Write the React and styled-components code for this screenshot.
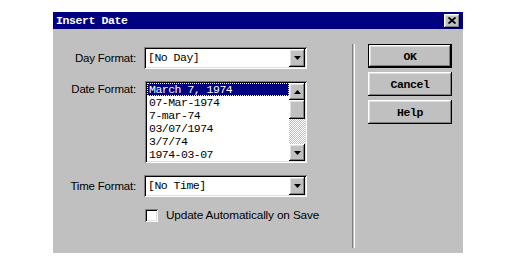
import React from "react";
import styled, { createGlobalStyle, css } from "styled-components";

const GlobalStyle = createGlobalStyle`
  html, body {
    margin: 0;
    padding: 0;
    background: #ffffff;
  }
  body {
    width: 521px;
    height: 270px;
    overflow: hidden;
  }
`;

const face = "#c0c0c0";
const navy = "#000080";
const mono = `"Liberation Mono", "DejaVu Sans Mono", monospace`;
const sans = `"Liberation Sans", Arial, sans-serif`;

const raised = css`
  background: ${face};
  box-shadow: inset -1px -1px #000000, inset 1px 1px #ffffff,
    inset -2px -2px #808080, inset 2px 2px #dfdfdf;
`;

const sunken = css`
  box-shadow: inset 1px 1px #808080, inset -1px -1px #ffffff,
    inset 2px 2px #000000, inset -2px -2px #dfdfdf;
`;

const Page = styled.div`
  padding: 12px 0 0 53px;
`;

const Dialog = styled.div`
  width: 410px;
  height: 241px;
  background: ${face};
  display: flex;
  flex-direction: column;
`;

const TitleBar = styled.div`
  height: 17px;
  background: ${navy};
  display: flex;
  align-items: center;
  justify-content: space-between;
  padding: 0 3px 0 3px;
`;

const Title = styled.span`
  color: #ffffff;
  font-family: ${mono};
  font-size: 11.5px;
  font-weight: 700;
  letter-spacing: -0.4px;
`;

const CloseButton = styled.div`
  ${raised};
  width: 16px;
  height: 14px;
  display: flex;
  align-items: center;
  justify-content: center;
`;

const Body = styled.div`
  flex: 1;
  display: flex;
`;

const FormPanel = styled.div`
  width: 299px;
  display: grid;
  grid-template-columns: 83px 163px;
  grid-auto-rows: min-content;
  column-gap: 8px;
  row-gap: 12px;
  padding-top: 18px;
  align-items: center;
`;

const Label = styled.label`
  font-family: ${sans};
  font-size: 11.5px;
  color: #000000;
  text-align: right;
  white-space: nowrap;
  letter-spacing: -0.2px;
  ${(p) =>
    p.$top &&
    css`
      align-self: start;
      margin-top: 2px;
    `}
`;

const Combo = styled.div`
  ${sunken};
  background: #ffffff;
  height: 22px;
  padding: 2px;
  box-sizing: border-box;
  display: flex;
  align-items: stretch;
`;

const ComboText = styled.span`
  flex: 1;
  font-family: ${mono};
  font-size: 11.5px;
  letter-spacing: -0.5px;
  line-height: 18px;
  padding-left: 2px;
  color: #000000;
`;

const ArrowButton = styled.div`
  ${raised};
  width: 16px;
  height: ${(p) => p.$height || 18}px;
  display: flex;
  align-items: center;
  justify-content: center;
  flex-shrink: 0;
`;

const ListBox = styled.div`
  ${sunken};
  background: #ffffff;
  height: 82px;
  margin-left: 1px;
  padding: 2px;
  box-sizing: border-box;
  display: flex;
`;

const Items = styled.ul`
  flex: 1;
  margin: 0;
  padding: 0;
  list-style: none;
`;

const Item = styled.li`
  height: 13px;
  font-family: ${mono};
  font-size: 11.5px;
  letter-spacing: -0.5px;
  line-height: 13px;
  padding-left: 2px;
  box-sizing: border-box;
  color: #000000;
  white-space: nowrap;
  ${(p) =>
    p.$selected &&
    css`
      background: ${navy};
      color: #ffffff;
      outline: 1px dotted #ffff80;
      outline-offset: -1px;
    `}
`;

const ScrollBar = styled.div`
  width: 16px;
  display: flex;
  flex-direction: column;
`;

const Thumb = styled.div`
  ${raised};
  height: 19px;
`;

const Track = styled.div`
  flex: 1;
  background: repeating-conic-gradient(#c0c0c0 0% 25%, #ffffff 0% 50%) 0 0 / 2px 2px;
`;

const CheckRow = styled.div`
  grid-column: 2;
  display: flex;
  align-items: center;
  gap: 8px;
  margin-top: -2px;
  margin-left: 1px;
  white-space: nowrap;
`;

const CheckBox = styled.span`
  ${sunken};
  background: #ffffff;
  width: 13px;
  height: 13px;
  flex-shrink: 0;
`;

const CheckLabel = styled.span`
  font-family: ${sans};
  font-size: 11.8px;
  color: #000000;
  letter-spacing: -0.15px;
  line-height: 16px;
`;

const Separator = styled.div`
  width: 1px;
  margin: 15px 0 5px;
  border-left: 1px solid #808080;
  border-right: 1px solid #ffffff;
`;

const ButtonColumn = styled.div`
  display: flex;
  flex-direction: column;
  gap: 4px;
  padding: 15px 0 0 13px;
`;

const Button = styled.div`
  ${raised};
  width: 84px;
  height: 24px;
  box-sizing: border-box;
  display: flex;
  align-items: center;
  justify-content: center;
  font-family: ${mono};
  font-size: 11.5px;
  font-weight: 700;
  letter-spacing: -0.4px;
  color: #000000;
  ${(p) =>
    p.$default &&
    css`
      box-shadow: inset 0 0 0 1px #000000, inset -2px -2px #000000,
        inset 2px 2px #ffffff, inset -3px -3px #808080, inset 3px 3px #dfdfdf;
    `}
`;

const Arrow = ({ up }) => (
  <svg width="7" height="4" viewBox="0 0 7 4">
    <polygon points={up ? "3.5,0 7,4 0,4" : "0,0 7,0 3.5,4"} fill="#000000" />
  </svg>
);

const CloseIcon = () => (
  <svg width="8" height="7" viewBox="0 0 8 7">
    <path d="M0.5 0.5 L7.5 6.5 M7.5 0.5 L0.5 6.5" stroke="#000000" strokeWidth="1.8" />
  </svg>
);

const dateFormats = [
  "March 7, 1974",
  "07-Mar-1974",
  "7-mar-74",
  "03/07/1974",
  "3/7/74",
  "1974-03-07",
];

const App = () => {
  return (
    <>
      <GlobalStyle />
      <Page>
        <Dialog>
          <TitleBar>
            <Title>Insert Date</Title>
            <CloseButton>
              <CloseIcon />
            </CloseButton>
          </TitleBar>
          <Body>
            <FormPanel>
              <Label>Day Format:</Label>
              <Combo>
                <ComboText>[No Day]</ComboText>
                <ArrowButton>
                  <Arrow />
                </ArrowButton>
              </Combo>

              <Label $top>Date Format:</Label>
              <ListBox>
                <Items>
                  {dateFormats.map((f, i) => (
                    <Item key={f} $selected={i === 0}>
                      {f}
                    </Item>
                  ))}
                </Items>
                <ScrollBar>
                  <ArrowButton $height={17}>
                    <Arrow up />
                  </ArrowButton>
                  <Thumb />
                  <Track />
                  <ArrowButton $height={17}>
                    <Arrow />
                  </ArrowButton>
                </ScrollBar>
              </ListBox>

              <Label>Time Format:</Label>
              <Combo>
                <ComboText>[No Time]</ComboText>
                <ArrowButton>
                  <Arrow />
                </ArrowButton>
              </Combo>

              <CheckRow>
                <CheckBox />
                <CheckLabel>Update Automatically on Save</CheckLabel>
              </CheckRow>
            </FormPanel>
            <Separator />
            <ButtonColumn>
              <Button $default>OK</Button>
              <Button>Cancel</Button>
              <Button>Help</Button>
            </ButtonColumn>
          </Body>
        </Dialog>
      </Page>
    </>
  );
};

export default App;
